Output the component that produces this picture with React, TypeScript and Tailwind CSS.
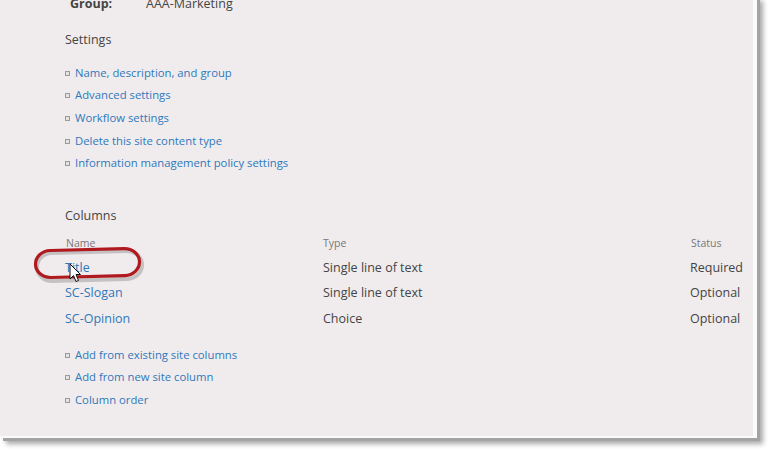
import React from 'react'

const settingsLinks = [
  'Name, description, and group',
  'Advanced settings',
  'Workflow settings',
  'Delete this site content type',
  'Information management policy settings',
]

const columns = [
  { name: 'Title', type: 'Single line of text', status: 'Required' },
  { name: 'SC-Slogan', type: 'Single line of text', status: 'Optional' },
  { name: 'SC-Opinion', type: 'Choice', status: 'Optional' },
]

const columnLinks = ['Add from existing site columns', 'Add from new site column', 'Column order']

const LinkItem = ({ label }: { label: string }) => (
  <li className="flex items-center h-[22.6px]">
    <span className="w-[5px] h-[5px] border border-[#9a9a9a] bg-[#e4e4e4] mr-[5px]" />
    <a className="text-[#2f78ba] text-[11.3px] cursor-pointer">{label}</a>
  </li>
)

const Cursor = () => (
  <svg className="absolute left-[69px] top-[268px]" width="13" height="20" viewBox="0 0 13 20">
    <path d="M1 1 L1 16 L4.5 12.5 L7 18.5 L9.5 17.5 L7 11.5 L11.5 11.5 Z" fill="#fff" stroke="#111" strokeWidth="1" strokeLinejoin="round" />
  </svg>
)

const Highlight = () => (
  <svg className="absolute left-[30px] top-[249px]" width="118" height="40" viewBox="0 0 118 40">
    <rect x="7" y="8" width="105" height="28" rx="15" ry="14" fill="none" stroke="rgba(0,0,0,0.18)" strokeWidth="4" transform="rotate(-1.5 59 21)" />
    <rect x="5.5" y="5.5" width="104" height="27" rx="15" ry="13.5" fill="none" stroke="#b01a1f" strokeWidth="3.2" transform="rotate(-1.5 58 19)" />
  </svg>
)

export default function App() {
  return (
    <div className="w-[774px] h-[460px] bg-white overflow-hidden" style={{ fontFamily: '"Open Sans", "Noto Sans", sans-serif' }}>
      <div className="relative w-[757px] h-[443px] bg-[#f0ecee] border-r-[4px] border-b-[2px] border-r-[#fbfbfb] border-b-[#fbfbfb] shadow-[3px_3px_0_#a3a3a3,6px_6px_5px_rgba(0,0,0,0.35)] pl-[65px] text-[#444]">
        <div className="flex mt-[-5px] leading-[18px] text-[12.5px]">
          <span className="font-bold w-[81px] pl-[5px]">Group:</span>
          <span>AAA-Marketing</span>
        </div>

        <div className="mt-[18px] leading-[18px] text-[12.5px]">Settings</div>
        <ul className="mt-[13px]">
          {settingsLinks.map((l) => (
            <LinkItem key={l} label={l} />
          ))}
        </ul>

        <div className="mt-[32px] leading-[18px] text-[12.5px]">Columns</div>
        <div className="grid grid-cols-[258px_367px_auto] mt-[10px]">
          <div className="text-[10.5px] text-[#777] leading-[16px] pl-[1px]">Name</div>
          <div className="text-[10.5px] text-[#777] leading-[16px]">Type</div>
          <div className="text-[10.5px] text-[#777] leading-[16px] pl-[1px]">Status</div>
        </div>
        <div className="mt-[4.5px]">
          {columns.map((c) => (
            <div key={c.name} className="grid grid-cols-[258px_367px_auto] h-[25.5px] items-center text-[12.5px]">
              <a className="text-[#2f78ba] cursor-pointer">{c.name}</a>
              <span>{c.type}</span>
              <span>{c.status}</span>
            </div>
          ))}
        </div>
        <ul className="mt-[12px]">
          {columnLinks.map((l) => (
            <LinkItem key={l} label={l} />
          ))}
        </ul>

        <Highlight />
        <Cursor />
      </div>
    </div>
  )
}
